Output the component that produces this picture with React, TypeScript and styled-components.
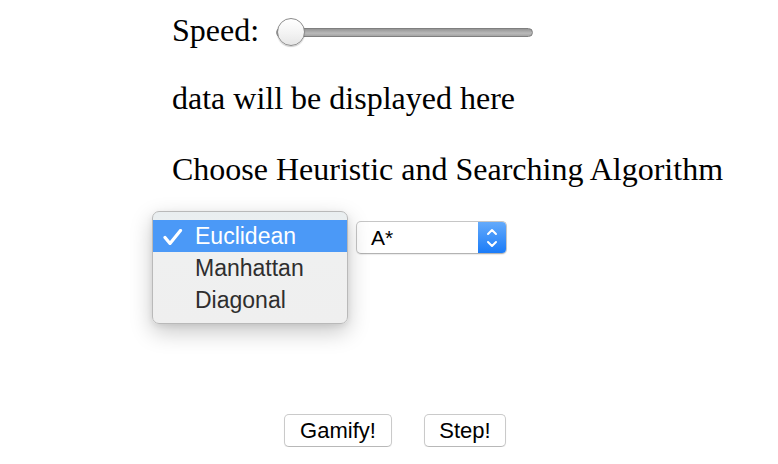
import React from "react";
import styled, { createGlobalStyle } from "styled-components";

const Global = createGlobalStyle`
  html, body { margin: 0; padding: 0; background: #fff; }
  body { font-family: "Liberation Serif", "Times New Roman", serif; color: #000; }
`;

const Page = styled.main`
  padding: 12px 0 0 172px;
  display: flex;
  flex-direction: column;
  align-items: flex-start;
`;

const TextRow = styled.p<{ $top?: number }>`
  margin: ${(p) => p.$top ?? 0}px 0 0 0;
  font-size: 32px;
  line-height: 37px;
  display: flex;
  align-items: center;
`;

const Slider = styled.input`
  -webkit-appearance: none;
  appearance: none;
  width: 257px;
  height: 28px;
  margin: 3px 0 0 17px;
  padding: 0;
  background: transparent;
  &::-webkit-slider-runnable-track {
    height: 9px;
    border-radius: 5px;
    box-sizing: border-box;
    border: 1px solid #7f7f7f;
    background: linear-gradient(#959595, #b9b9b9 60%, #a4a4a4);
  }
  &::-webkit-slider-thumb {
    -webkit-appearance: none;
    width: 28px;
    height: 28px;
    margin-top: -10.5px;
    border-radius: 50%;
    box-sizing: border-box;
    border: 1px solid #8c8c8c;
    background: linear-gradient(#ffffff, #f3f3f3 55%, #e6e6e6);
    box-shadow: 0 1px 1px rgba(0, 0, 0, 0.2);
  }
`;

const Controls = styled.div`
  margin-top: 33px;
  display: flex;
  gap: 8px;
  font-family: "Liberation Sans", Arial, sans-serif;
`;

const SelectWrap = styled.div`
  position: relative;
`;

const SelectBox = styled.div<{ $w: number }>`
  width: ${(p) => p.$w}px;
  height: 33px;
  box-sizing: border-box;
  border: 1px solid #c6c6c6;
  border-bottom-color: #b3b3b3;
  border-radius: 5px;
  background: #fff;
  box-shadow: 0 1px 1px rgba(0, 0, 0, 0.08);
  display: flex;
  align-items: stretch;
  overflow: hidden;
`;

const SelectValue = styled.span<{ $covered?: boolean }>`
  flex: 1;
  display: flex;
  align-items: center;
  padding-left: 14px;
  font-size: 21px;
  color: #000;
  visibility: ${(p) => (p.$covered ? "hidden" : "visible")};
`;

const Stepper = styled.span`
  width: 28px;
  background: linear-gradient(#64aafb, #1b7cf8);
  display: flex;
  align-items: center;
  justify-content: center;
`;

const Popup = styled.ul`
  position: absolute;
  left: -20px;
  top: -10px;
  z-index: 2;
  width: 196px;
  margin: 0;
  padding: 8px 0 7px;
  list-style: none;
  box-sizing: border-box;
  border: 1px solid #b9b9b9;
  border-radius: 7px;
  background: linear-gradient(#e9eef0, #eff0f0 40%, #efefef);
  box-shadow: 0 8px 22px rgba(0, 0, 0, 0.22), 0 2px 6px rgba(0, 0, 0, 0.08);
`;

const Option = styled.li<{ $active?: boolean }>`
  position: relative;
  height: 32px;
  display: flex;
  align-items: center;
  padding-left: 42px;
  font-size: 23px;
  color: ${(p) => (p.$active ? "#fff" : "#2e2e2e")};
  background: ${(p) => (p.$active ? "#4b99f7" : "transparent")};
`;

const Check = styled.svg`
  position: absolute;
  left: 10px;
  top: 9px;
`;

const Buttons = styled.div`
  margin: 160px 0 0 112px;
  display: flex;
  gap: 32px;
  font-family: "Liberation Sans", Arial, sans-serif;
`;

const Button = styled.button<{ $w: number }>`
  width: ${(p) => p.$w}px;
  height: 33px;
  padding: 0;
  box-sizing: border-box;
  border: 1px solid #cacaca;
  border-bottom-color: #b8b8b8;
  border-radius: 5px;
  background: #fff;
  box-shadow: 0 1px 1px rgba(0, 0, 0, 0.08);
  font-family: inherit;
  font-size: 22px;
  color: #000;
`;

const Chevrons = () => (
  <svg width="14" height="22" viewBox="0 0 14 22" fill="none" stroke="#fff" strokeWidth="2" strokeLinecap="round" strokeLinejoin="round">
    <path d="M3 7 L7 3 L11 7" />
    <path d="M3 15 L7 19 L11 15" />
  </svg>
);

export default function App() {
  return (
    <>
      <Global />
      <Page>
        <TextRow>
          Speed:
          <Slider type="range" min={0} max={100} defaultValue={0} />
        </TextRow>
        <TextRow $top={31}>data will be displayed here</TextRow>
        <TextRow $top={34}>Choose Heuristic and Searching Algorithm</TextRow>
        <Controls>
          <SelectWrap>
            <SelectBox $w={176}>
              <SelectValue $covered>Euclidean</SelectValue>
              <Stepper>
                <Chevrons />
              </Stepper>
            </SelectBox>
            <Popup>
              <Option $active>
                <Check width="20" height="16" viewBox="0 0 20 16">
                  <path d="M2 8.5 L7 14.5 L17.5 1.5" fill="none" stroke="#fff" strokeWidth="3.2" strokeLinecap="round" strokeLinejoin="round" />
                </Check>
                Euclidean
              </Option>
              <Option>Manhattan</Option>
              <Option>Diagonal</Option>
            </Popup>
          </SelectWrap>
          <SelectBox $w={151}>
            <SelectValue>A*</SelectValue>
            <Stepper>
              <Chevrons />
            </Stepper>
          </SelectBox>
        </Controls>
        <Buttons>
          <Button $w={108}>Gamify!</Button>
          <Button $w={82}>Step!</Button>
        </Buttons>
      </Page>
    </>
  );
}
